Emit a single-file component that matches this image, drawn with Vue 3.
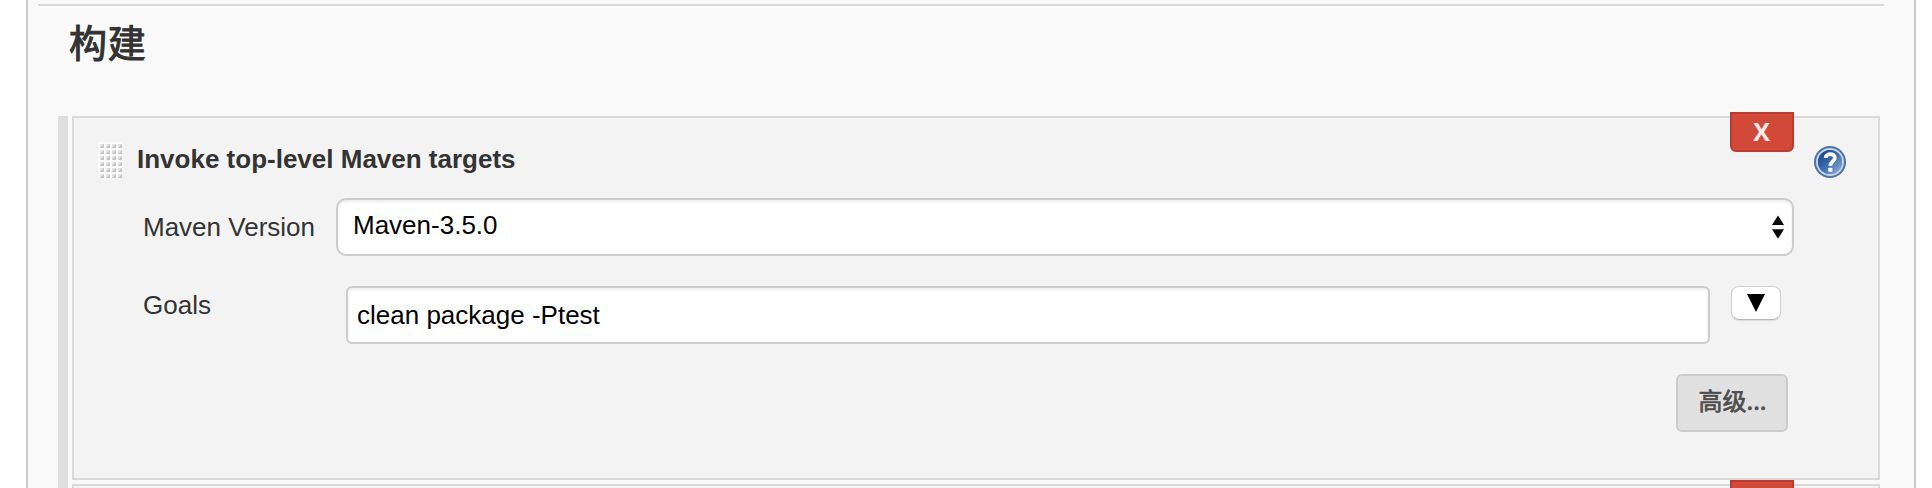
<script setup>
const rows = [0, 1, 2, 3, 4, 5]
const cols = [0, 1, 2, 3]
</script>

<template>
  <main class="panel">
    <hr class="rule" />
    <h1 class="heading"><span>构建</span></h1>
    <div class="builders">
      <section class="card">
        <button class="delete"><span>X</span></button>
        <header class="card-head">
          <svg class="handle" width="24" height="36" viewBox="0 0 24 36">
            <rect width="24" height="36" fill="#fafafa" />
            <template v-for="r in rows" :key="r">
              <g v-for="c in cols" :key="c" :transform="`translate(${c * 6 + 2} ${r * 6 + 2})`">
                <rect width="4" height="4" fill="#e4e4e4" />
                <path d="M4 0V4H0Z" fill="#c4c4c4" />
              </g>
            </template>
          </svg>
          <b class="title">Invoke top-level Maven targets</b>
          <svg class="help" width="32" height="32" viewBox="0 0 32 32">
            <defs>
              <linearGradient id="helpFill" x1="0" y1="0" x2="1" y2="1">
                <stop offset="0.15" stop-color="#1f4c94" />
                <stop offset="0.5" stop-color="#3f6cab" />
                <stop offset="0.95" stop-color="#8fb0da" />
              </linearGradient>
            </defs>
            <circle cx="16" cy="16" r="16" fill="#4e70a8" />
            <circle cx="16" cy="16" r="13" fill="none" stroke="#c3d3ea" stroke-width="2" />
            <circle cx="16" cy="16" r="12" fill="url(#helpFill)" />
            <path d="M11.6 11.8C11.9 6.8 21 6.9 20.8 12C20.7 15.6 16.4 15.3 16.3 19.8" fill="none" stroke="#fff" stroke-width="3.8" />
            <rect x="14.2" y="21.8" width="4.2" height="4" rx="0.8" fill="#fff" />
          </svg>
        </header>
        <div class="row version">
          <label class="label">Maven Version</label>
          <div class="select">
            <span>Maven-3.5.0</span>
            <svg width="12" height="24" viewBox="0 0 12 24">
              <path d="M6 0.5L12 10H0ZM0 14.3H12L6 23.7Z" />
            </svg>
          </div>
        </div>
        <div class="row goals">
          <label class="label">Goals</label>
          <div class="input"><span>clean package -Ptest</span></div>
          <button class="expand">
            <svg width="18" height="18" viewBox="0 0 18 18"><path d="M0 0H18L9 18Z" /></svg>
          </button>
        </div>
        <div class="actions">
          <button class="advanced"><span>高级...</span></button>
        </div>
      </section>
      <section class="card">
        <button class="delete"></button>
      </section>
    </div>
  </main>
</template>

<style>
html,
body {
  margin: 0;
  overflow: hidden;
  background: #fff;
}
</style>

<style scoped>
* {
  box-sizing: border-box;
}
.panel {
  width: 1890px;
  height: 488px;
  margin-left: 26px;
  padding-top: 4px;
  overflow: hidden;
  background: #f9f9f9;
  border: solid #ccc;
  border-width: 0 2px;
  color: #333;
  font: 26px/30px "Liberation Sans", "Noto Sans CJK SC", sans-serif;
}
.rule {
  width: 1846px;
  height: 2px;
  margin: 0 0 0 10px;
  border: 0;
  background: #d9d9d9;
}
.heading {
  height: 110px;
  margin: 0;
  padding: 7px 0 0 41px;
  font: 400 38px/56px "Noto Sans CJK SC", sans-serif;
  letter-spacing: 0.7px;
  -webkit-text-stroke: 1px #333;
}
.builders {
  width: 1822px;
  margin-left: 30px;
  padding-left: 4px;
  border-left: 10px solid #dfdfdf;
  display: flex;
  flex-direction: column;
  gap: 4px;
}
.card {
  position: relative;
  flex: none;
  height: 364px;
  background: #f3f3f3;
  border: 2px solid #d9d9d9;
}
.delete {
  position: absolute;
  top: -6px;
  right: 84px;
  width: 64px;
  height: 40px;
  padding: 0 1px 2px 0;
  border: 2px solid #b93c30;
  border-radius: 0 0 6px 6px;
  background: #d24939;
  color: #fbeceb;
  font: bold 25px/34px "Open Sans", sans-serif;
}
.card-head {
  display: flex;
  height: 80px;
  padding: 24px 32px 0 24px;
}
.title {
  margin: 1px auto 0 15px;
  line-height: 32px;
}
.help {
  margin-top: 4px;
}
.row {
  display: flex;
}
.label {
  flex: none;
  padding-left: 69px;
}
.version {
  height: 88px;
}
.version .label {
  width: 262px;
  padding-top: 14px;
}
.select {
  display: flex;
  justify-content: space-between;
  width: 1458px;
  height: 58px;
  padding: 10px 8px 0 15px;
  border: 2px solid #ccc;
  border-radius: 10px;
  background: #fff;
  box-shadow: inset 0 2px 3px #ececec;
  color: #000;
}
.select svg {
  margin-top: 5px;
}
.goals .label {
  width: 272px;
  padding-top: 4px;
}
.input {
  width: 1364px;
  height: 58px;
  padding: 12px 9px 0;
  border: 2px solid #ccc;
  border-radius: 6px;
  background: #fff;
  box-shadow: inset 0 2px 3px #ececec;
  color: #000;
}
.expand {
  display: flex;
  justify-content: center;
  width: 50px;
  height: 34px;
  margin-left: 21px;
  padding: 7px 0 0;
  border: 1px solid #d0d0d0;
  border-bottom-color: #b8b8b8;
  border-radius: 8px;
  background: #fff;
  box-shadow: 0 1px 1px #ddd;
}
.actions {
  display: flex;
  justify-content: flex-end;
  padding: 30px 90px 0 0;
}
.advanced {
  width: 112px;
  height: 58px;
  padding: 0 0 7px 1px;
  border: 2px solid #ccc;
  border-radius: 6px;
  background: #e0e0e0;
  color: #4d4d4d;
  font: 400 24px/30px "Noto Sans CJK SC", sans-serif;
  -webkit-text-stroke: 0.7px #4d4d4d;
}
</style>
